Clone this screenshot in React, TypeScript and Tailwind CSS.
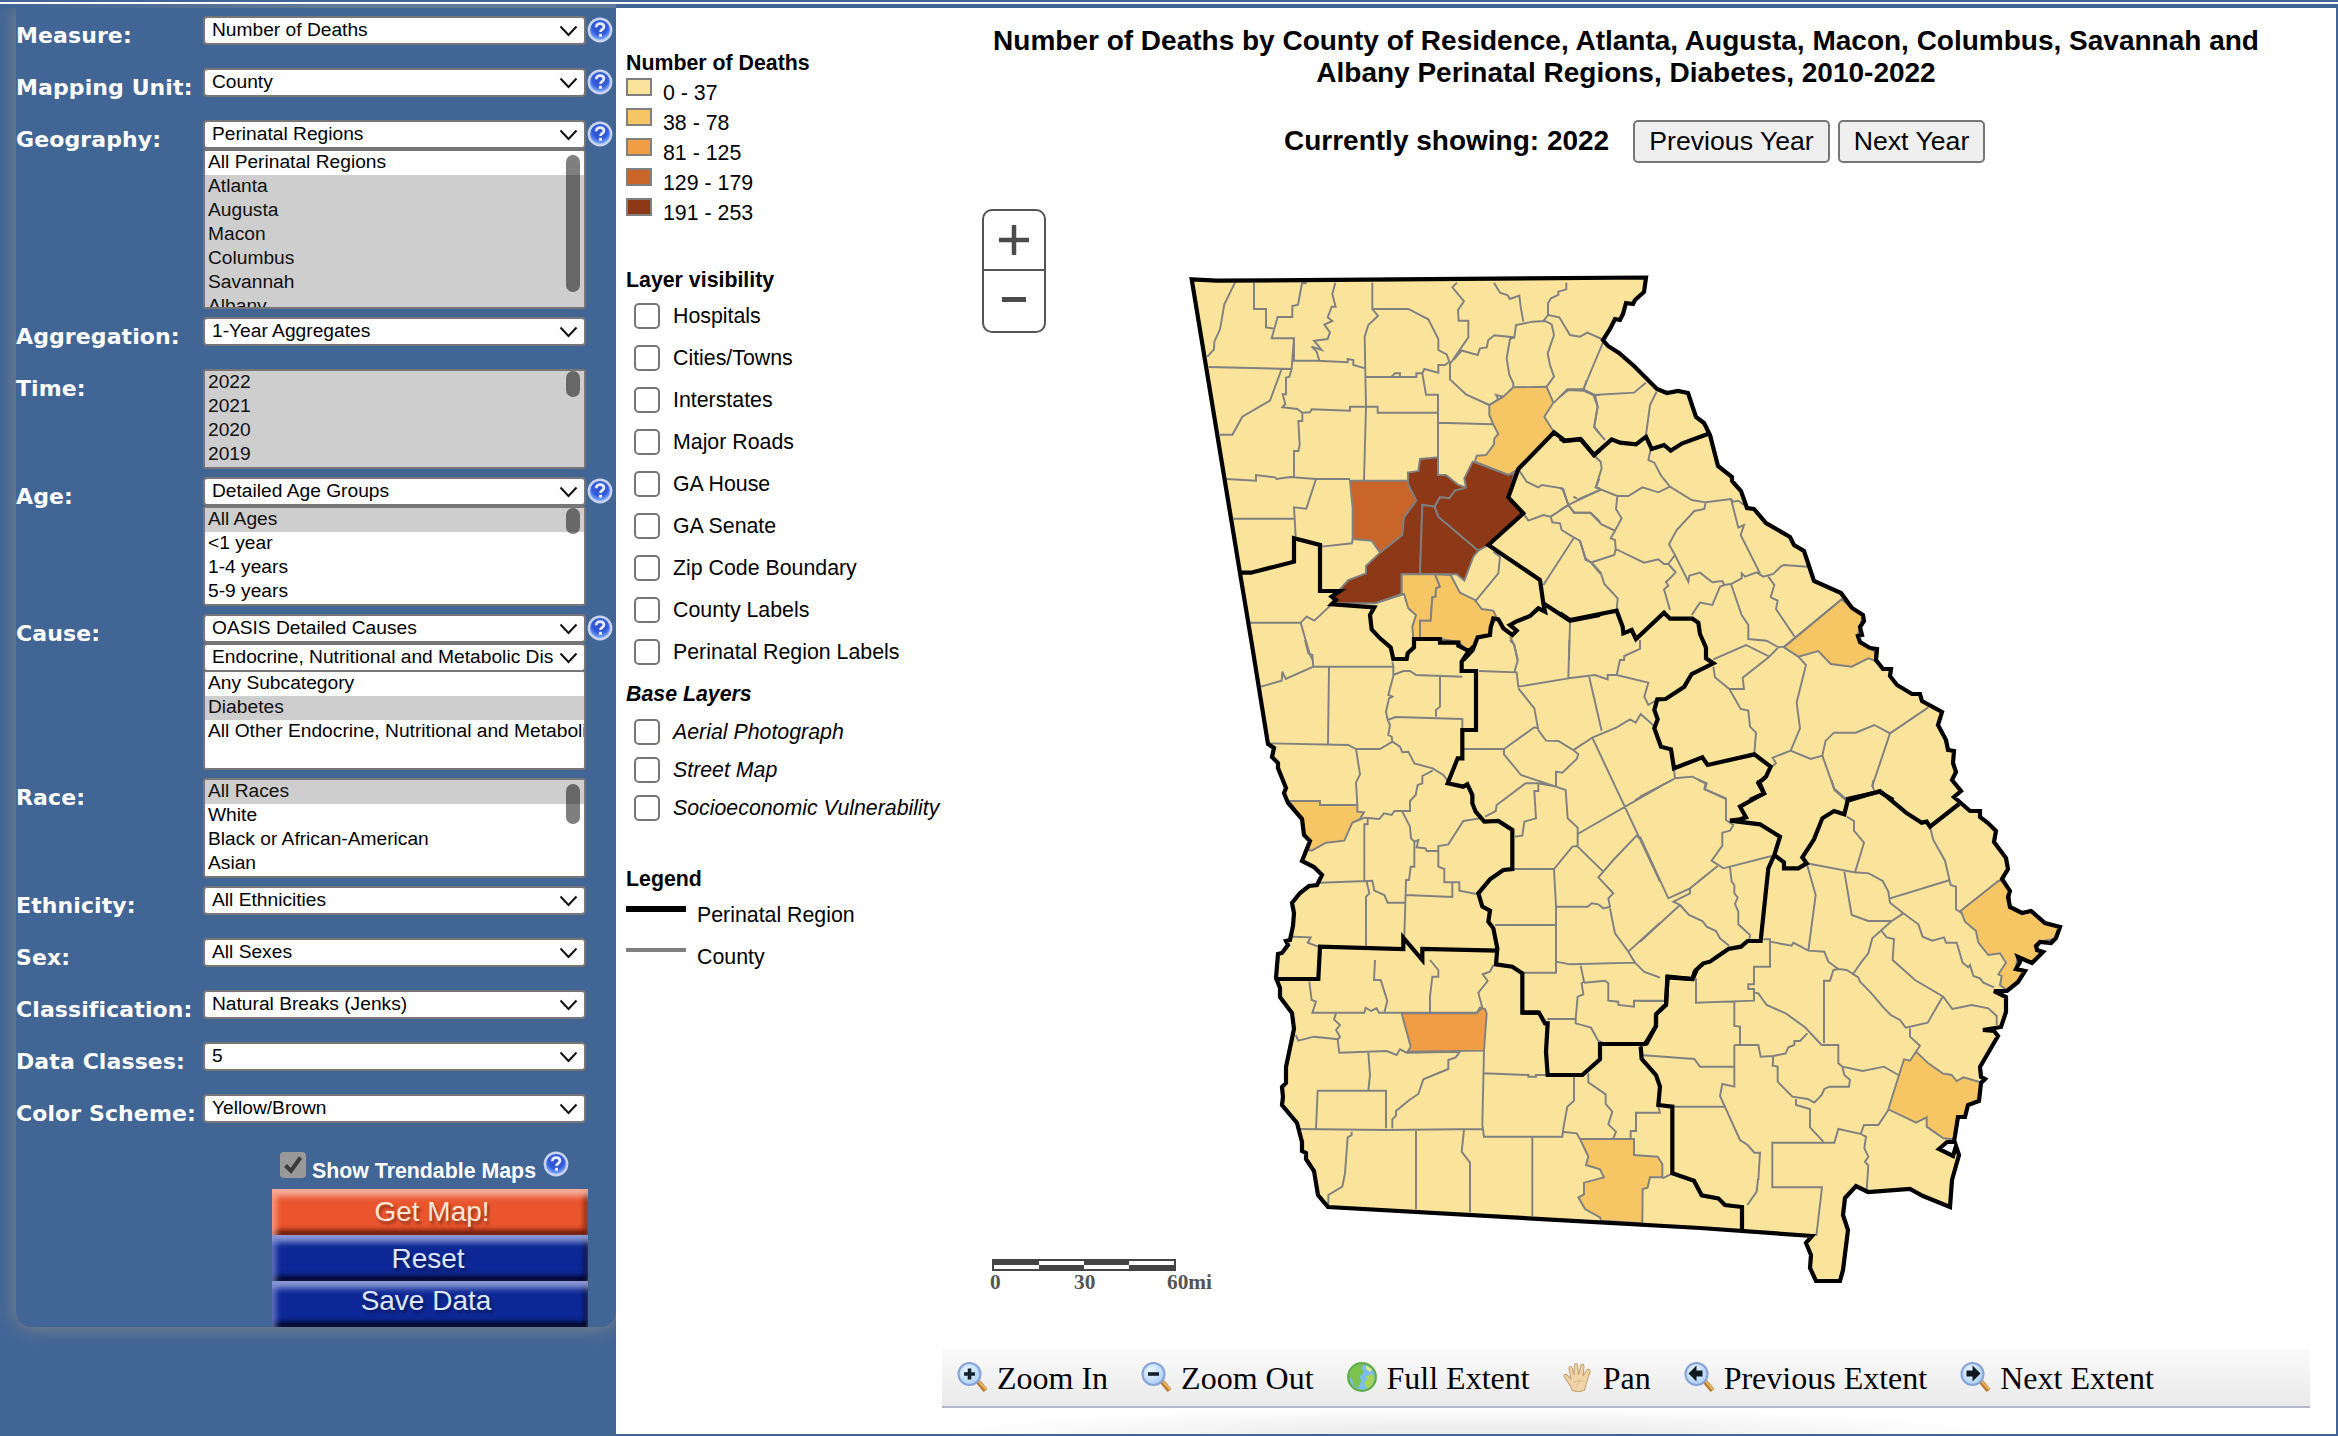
import React from "react";

const LIGHT = "#fae49b";
const GOLD = "#f6c665";
const ORANGE = "#f09d45";
const RUST = "#c96529";
const BROWN = "#8d3817";

/* ---------- map data ---------- */

const STATE =
  "M1191.7,279.3 L1216.7,280.7 L1646,277.5 L1644,292 L1635,300 L1633,304 L1626,303 L1623,314 L1620,320 L1615,319 L1610,329 L1603,340 L1608,346 L1619,353 L1634,366 L1647,379 L1657,389 L1667,393 L1678,391 L1688,393 L1696,417 L1704,423 L1710,435 L1718,466 L1732,477 L1732,481 L1741,491 L1747,508 L1754,509 L1766,523 L1790,537 L1794,545 L1804,551 L1814,581 L1841,593 L1852,608 L1863,615 L1864,621 L1860,627 L1862,635 L1858,636 L1860,642 L1870,648 L1877,649 L1876,660 L1883,669 L1891,669 L1890,676 L1897,685 L1912,694 L1920,694 L1922,701 L1942,712 L1938,725 L1946,740 L1948,750 L1954,751 L1953,763 L1956,772 L1952,780 L1961,791 L1954,797 L1970,811 L1980,811 L1980,817 L1988,823 L1996,831 L1994,842 L2006,858 L2008,869 L2002,879 L2010,891 L2008,897 L2010,907 L2022,913 L2031,911 L2045,923 L2060,927 L2056,938 L2051,943 L2040,942 L2036,946 L2037,950 L2043,952 L2032,963 L2018,957 L2020,962 L2016,969 L2025,971 L2018,982 L2007,991 L1994,991 L2006,997 L2006,1012 L2001,1027 L1983,1030 L1994,1031 L1998,1036 L1980,1067 L1981,1077 L1985,1079 L1981,1083 L1979,1101 L1968,1105 L1965,1117 L1958,1117 L1954,1142 L1947,1142 L1939,1149 L1953,1156 L1956,1146 L1959,1155 L1952,1180 L1950,1207 L1923,1196 L1910,1189 L1868,1192 L1856,1186 L1845,1198 L1843,1215 L1848,1230 L1843,1270 L1840,1281 L1816,1281 L1810,1268 L1811,1255 L1806,1243 L1812,1236 L1700,1228 L1328,1207 L1318,1195 L1314,1171 L1306,1159 L1306,1153 L1302,1151 L1302,1142 L1297,1123 L1282,1105 L1283,1097 L1282,1087 L1286,1083 L1286,1067 L1294,1029 L1292,1013 L1280,997 L1280,988 L1276,978 L1278,954 L1282,953 L1288,945 L1286,941 L1290,940 L1293,926 L1294,913 L1292,903 L1300,893 L1309,886 L1317,885 L1322,875 L1314,867 L1302,861 L1310,841 L1304,835 L1302,819 L1288,803 L1284,793 L1286,788 L1278,768 L1278,763 L1272,757 L1274,748 L1268,744 L1252,645 L1240,573 Z";

type Sheet = {
  at: string;
  fills: [string, string][];
  county: string;
  region: string;
};

/* The map is kept as five sheets, each drawn in its own three-to-one grid. */
const SHEETS: Sheet[] = [
  {
    at: "translate(1180 260) scale(0.33333)",
    fills: [
      [GOLD, "M928,435 L970,410 L1000,382 L1100,380 L1120,428 L1093,470 L1122,517 L1015,627 L985,645 L885,605 L890,587 L918,585 L942,553 L943,535 L955,522 L940,493 L928,465 Z"],
      [RUST, "M510,662 H684 V672 L709,722 L672,772 L667,825 L600,878 L575,842 L518,837 V745 Z"],
      [BROWN, "M684,662 V638 L715,633 L720,597 L774,592 V645 H798 L835,675 L858,683 L825,692 L808,715 L780,712 L764,740 L727,735 L720,943 H665 V1002 L585,1030 L470,1030 L460,1010 L505,960 L558,940 V918 L600,878 L667,825 L672,772 L709,722 L684,672 Z"],
      [BROWN, "M727,735 L764,740 L775,770 L895,872 L880,890 L853,962 L830,943 H720 Z"],
      [BROWN, "M764,740 L780,712 L808,715 L825,692 L858,683 L853,655 L878,605 L985,645 L1003,640 L985,712 L1030,760 L925,855 L895,872 L775,770 Z"],
      [GOLD, "M665,943 H765 L780,980 L768,985 L767,1010 L757,1012 L752,1082 H720 V1135 H700 L697,1100 L708,1065 L685,1045 L672,1002 L665,1002 Z"],
      [GOLD, "M765,943 L812,945 L840,998 L885,1020 L905,1047 L940,1052 L950,1073 L932,1103 L930,1125 L893,1132 L878,1170 L860,1170 L835,1145 L780,1137 L720,1135 V1082 H752 L757,1012 L767,1010 L768,985 L780,980 Z"],
    ],
    county:
      "M165,68 L133,133 L120,208 L103,245 L102,268 L82,290 M222,68 V147 H258 V202 L283,206 L293,171 H337 V138 L354,134 L366,70 H380 M283,206 L275,235 H342 V302 H410 L503,307 V297 L520,300 V315 L556,325 M466,68 L457,102 L467,140 H455 L443,172 L457,183 L433,194 L450,217 L443,237 L402,242 L425,270 L395,260 L410,275 L418,302 M342,235 L335,325 M86,321 L335,327 L328,350 L318,353 V403 H308 L316,432 L307,442 L352,447 L367,458 L390,457 L395,448 L510,452 V440 H593 V458 H774 M305,327 L270,422 L187,470 L157,524 H120 M367,458 V483 H355 L359,555 L355,573 H342 V652 M577,68 V147 H685 L745,178 L775,237 V270 L800,283 L808,305 L795,315 H775 V338 L733,327 L727,340 H709 V351 H558 M577,147 L594,168 L565,195 L554,230 L558,440 L552,660 M635,350 L645,340 H660 V350 M727,340 L738,404 H774 V645 M831,68 L817,82 L852,124 L834,150 L836,182 H865 V232 L810,312 V358 L858,403 L928,435 M775,488 L940,493 M820,300 L845,272 L893,285 L900,265 L920,262 L925,240 L943,226 L1003,232 L1008,195 L1058,185 L1095,183 L1115,193 L1122,225 L1103,280 L1110,315 L1122,350 L1100,380 M970,410 L948,405 L955,418 L928,435 M1003,232 L990,237 L980,295 L988,345 L1000,370 V382 M942,68 L960,98 L982,105 L990,117 L1018,107 L1022,140 L1030,185 M1159,68 V88 L1135,95 V105 L1113,115 L1104,130 V165 L1090,183 M1104,165 L1138,172 L1170,225 L1200,230 L1222,218 L1272,240 M1272,240 L1210,388 L1162,388 L1122,428 M1210,388 L1245,405 L1253,440 L1243,500 L1260,522 M1240,405 H1260 M140,657 L228,662 V645 L285,652 L290,657 L330,651 L408,657 H510 M408,657 L379,746 L342,742 L347,830 M160,776 H342 M518,837 L516,850 L425,860 M960,890 L955,940 L885,1025 M960,890 L940,875 M585,1030 L672,1002 M210,1088 H362 L390,1185 L398,1200 M362,1088 L380,1070 L403,1082 L455,1033 M1015,627 L1040,665 L1075,682 L1085,675 L1147,685 L1165,735 L1112,770 L1090,765 L1045,782 L1030,760 M1165,735 L1183,758 H1232 L1260,785 M1165,735 L1260,690 M1112,770 L1117,787 L1140,790 L1145,810 L1182,833 L1090,975 M1182,833 L1200,842 L1217,895 L1235,910 L1260,940 M1245,590 L1260,605 M1260,685 L1248,682 L1258,655 M1170,1088 L1167,1200 M990,1130 L1003,1155 L1013,1200",
    region:
      "M1260,570 L1242,585 L1202,537 L1155,542 L1122,517 L1015,627 L985,712 L1030,760 L925,855 L1080,960 L1090,1030 L1170,1082 L1260,1065 M1090,1030 L1095,1055 L1075,1045 L1050,1068 L1008,1085 L990,1095 L1010,1112 L997,1125 L970,1105 L955,1078 L940,1075 L932,1103 L930,1125 L893,1132 L878,1170 L850,1200 M878,1170 L860,1170 L835,1157 V1148 H780 V1137 H702 V1162 L683,1180 L680,1197 H640 L632,1162 L600,1135 L575,1108 L570,1065 L583,1042 L455,1033 L468,1020 L455,1010 L480,993 H420 V855 L342,835 V905 L213,938 H182",
  },
  {
    at: "translate(1560 380) scale(0.33333)",
    fills: [
      [GOLD, "M845,658 L875,685 L908,705 L900,742 L893,765 L900,785 L945,815 L945,842 L925,835 L875,860 L812,852 L775,813 L715,830 L672,802 Z"],
    ],
    county:
      "M0,50 L25,30 L70,32 L80,0 M70,32 L100,45 L113,80 L102,142 L135,180 M100,45 L222,38 L258,8 M290,35 L270,75 L258,165 M102,225 L122,245 L125,265 L107,322 L172,348 L205,348 L247,322 L295,337 L330,320 L395,360 L437,367 L513,357 L520,365 L535,362 L555,377 M272,208 L265,240 L283,248 L302,285 L330,320 M50,355 L40,350 M50,360 L125,328 M0,390 L25,375 M0,325 L10,328 L25,375 L42,398 H90 L125,433 L165,452 L185,415 L168,387 L172,348 M165,452 L152,475 L165,480 L167,507 L163,525 L95,547 L122,578 L133,612 L173,655 L170,690 M60,483 L77,540 L95,547 M167,507 L252,548 L295,538 L312,552 L325,552 L347,577 L325,600 L318,605 L325,617 L312,628 L330,690 M437,367 L433,387 L403,393 L350,450 L327,493 L345,525 L385,605 L388,587 L420,578 L457,607 L487,603 L493,615 L513,612 L545,595 V580 L555,590 L590,577 L610,590 L640,582 L662,560 L672,555 L742,560 M345,525 L325,552 M513,357 L535,443 L552,435 L542,465 L600,580 M513,612 L545,705 L565,735 V777 L620,782 L655,802 L672,800 L845,658 M493,615 L480,620 L457,675 L420,668 L395,705 M625,590 L643,615 L632,652 L653,662 L648,687 L705,772 M715,830 L738,855 L710,967 L720,1045 L692,1112 L752,1137 L787,1127 L797,1082 L822,1058 H887 L943,1035 L990,1060 L937,1218 L942,1230 M990,1060 L1105,982 M787,1127 L822,1225 L858,1258 M692,1112 L638,1133 L648,1150 L635,1160 M460,838 L558,795 L628,830 L655,802 M628,830 L548,893 L552,927 H508 L465,892 L460,860 M508,927 L542,987 L565,992 L570,1040 L588,1058 L583,1120 M240,780 V807 L193,828 L192,840 L180,840 L170,885 M342,1168 L345,1195 L225,1260 M345,1195 L397,1190 L437,1210 L433,1227 L500,1258",
    region:
      "M0,175 L12,183 L62,178 L102,225 L155,178 L180,188 L228,193 L258,170 L275,207 L312,195 L332,212 L367,190 L450,160 M0,700 L30,720 L170,692 L188,740 L190,760 L215,750 L228,777 L312,698 L330,716 H397 L415,728 L420,762 L438,803 V835 L460,850 L395,882 L373,920 L317,957 L292,958 L283,990 L293,1018 L283,1045 L303,1100 L333,1108 L342,1165 L427,1132 L443,1155 L583,1123 L632,1160 L618,1190 L595,1210 L612,1240 L570,1260 M858,1258 L958,1235 L1000,1260",
  },
  {
    at: "translate(1240 640) scale(0.33333)",
    fills: [
      [GOLD, "M148,483 H240 V495 H352 V515 L372,517 L360,537 L337,548 L313,602 L258,608 L215,632 L205,630 L210,602 L192,585 L187,538 Z"],
    ],
    county:
      "M195,0 L205,40 L217,45 L220,80 L137,117 L127,95 L125,122 L63,140 M220,80 H460 L457,65 M267,80 L264,312 M88,310 L325,315 L348,327 H420 L457,305 L455,290 L445,285 L450,255 L443,240 L438,215 L447,175 L457,170 L445,165 L460,108 V80 M460,105 L490,93 H510 L528,105 L667,110 M600,105 V200 L588,210 V230 M443,240 L467,231 L667,237 V270 M457,305 L480,320 L487,337 L505,335 L523,370 L578,385 L610,405 L625,425 M348,327 L360,403 L348,427 L352,495 M375,533 L418,537 L432,520 L455,525 L463,513 H510 V483 L527,465 L533,435 L547,430 V408 L578,392 M337,548 L375,533 M383,535 V553 H373 V722 M240,728 L397,722 L403,752 L433,765 L443,788 H497 M380,725 L388,760 L378,770 V918 M487,515 L510,560 L513,595 L523,605 V680 H512 L507,720 H498 L493,890 M523,605 L535,600 L530,622 L557,625 L560,633 H593 M498,765 L637,771 V727 H613 V687 L595,680 V618 L625,613 L670,543 L720,535 M637,727 H658 V752 L710,762 M158,890 L212,892 L203,908 L235,920 M717,93 L830,97 L835,140 L985,115 M810,0 L823,15 L833,62 L823,97 M985,115 L1065,105 L1103,118 V105 H1130 L1225,128 L1213,170 L1225,195 L1250,180 M1047,108 L1085,272 M835,145 L883,205 L895,270 L918,302 L955,303 L1000,330 L1057,293 L1130,262 L1170,238 L1187,248 L1202,222 L1245,260 M985,115 L988,0 M1057,293 L1260,725 M1000,330 L1015,343 L1010,357 L967,398 L948,395 V440 L843,405 L792,343 V327 H672 M792,327 L883,262 L895,265 M948,440 L977,450 L983,535 L1013,563 V620 L1090,695 L1120,660 L1190,587 L1203,600 M1013,582 L1260,440 M1013,618 L997,620 L942,687 H820 M948,440 L895,430 H857 L770,495 L767,513 L735,530 M895,430 V453 H883 L888,535 L853,545 L847,587 L825,590 M942,687 L948,800 V998 H850 M948,800 H1043 L1055,790 L1075,793 L1090,805 L1110,800 L1105,775 L1120,760 L1075,712 L1090,695 M765,855 H948 M1110,805 L1125,880 L1165,935 L1260,848 M1165,935 L1185,968 L990,973 L948,965 M1185,968 L1212,995 L1260,1013",
    region:
      "M700,20 L683,38 L665,65 V93 H708 V270 H667 V355 L653,355 L623,430 L670,440 L682,433 L697,465 V490 L707,515 L733,545 L775,543 L817,570 V687 L790,690 L750,718 L715,760 L727,800 L750,812 L745,845 L760,865 L772,925 L768,973 L817,980 L847,1000 V1118 H897 M108,1017 H235 L240,920 L490,927 V893 L547,960 V927 L772,932",
  },
  {
    at: "translate(1260 960) scale(0.33333)",
    fills: [
      [ORANGE, "M425,160 H650 L660,143 L675,147 L680,160 L672,272 L443,275 L452,260 Z"],
      [GOLD, "M960,537 H1122 V585 L1193,590 L1207,612 V652 H1170 L1163,683 L1148,687 L1147,790 L1023,782 L1020,772 L975,747 L955,712 L972,703 V668 L1032,652 L1020,628 L978,615 L985,590 Z"],
    ],
    county:
      "M148,65 L155,120 L168,125 L157,158 H313 L317,143 L333,153 L350,145 L357,158 H650 L668,143 M345,0 L342,60 H362 L382,122 L373,158 M510,0 L535,30 V50 H517 L510,110 V158 M700,15 L690,35 L668,43 L683,63 L655,98 L667,143 M228,160 L222,178 L240,195 L228,210 L240,230 L233,240 L238,278 L380,273 L410,285 L420,268 L440,278 L600,275 M107,225 L115,242 L162,230 L235,238 M325,278 L330,345 L325,392 M168,505 L173,392 H378 V505 M118,507 L380,510 L667,507 M600,275 L587,292 L565,300 V327 L490,358 L475,402 L448,420 L408,453 V467 L397,478 V505 M672,272 L667,495 L672,530 H907 L910,505 L922,440 L942,422 V350 M672,340 L805,345 V350 H828 V345 H860 M907,515 L950,520 L960,537 M985,340 V367 L1037,403 V432 L1057,455 L1045,493 L1068,515 L1060,535 M1112,535 V513 H1128 V458 H1200 L1195,440 M1207,655 L1235,642 M275,515 L275,525 L263,532 L255,640 L247,680 L205,705 V740 M468,510 V748 M612,510 L605,575 L630,608 V757 M817,532 V768 M862,177 H947 L953,110 L970,103 L965,70 L972,65 L962,17 M947,177 V190 L993,203 L1015,243 L1028,247 M972,68 L1035,62 L1045,70 V122 L1075,125 V135 L1122,140 V122 H1215",
    region:
      "M787,158 H837 L855,190 L863,190 L858,275 L863,345 H967 L1020,298 V252 L1155,252 L1188,198 V163 L1218,133 L1223,50 L1298,57 L1310,30 M1142,260 L1145,297 L1188,345 L1200,380 L1195,435 L1237,440 V640 L1302,662 L1325,706 L1375,715 L1395,735 L1446,741 V816",
  },
  {
    at: "translate(1640 780) scale(0.33333)",
    fills: [
      [GOLD, "M962,392 L1075,303 L1090,300 L1110,335 L1110,382 L1147,400 L1172,393 L1215,430 L1260,442 L1248,475 L1200,485 L1190,510 L1210,515 L1177,550 L1133,530 L1127,567 L1155,572 L1133,607 L1100,630 L1080,615 L1085,588 L1075,583 L1098,548 L1080,520 L1045,525 L1015,488 L1008,453 L975,425 Z"],
      [GOLD, "M828,815 L865,850 L908,880 L935,885 L950,903 L970,892 L1022,907 L1017,962 L985,975 L975,1010 L955,1010 L940,1078 L910,1075 L860,1040 V1012 L828,1028 L745,988 L792,838 L810,842 Z"],
    ],
    county:
      "M175,0 L200,10 L195,28 L258,55 V120 L280,135 L270,152 L247,158 V197 L215,242 L250,265 L395,228 M0,50 L97,0 M0,170 L85,355 L150,325 L233,258 M150,325 V340 L100,365 L120,375 L0,485 M120,375 L147,405 L187,423 L200,440 L228,453 L240,475 L268,498 M270,262 L275,305 L283,315 V340 L293,352 L285,372 L295,395 V433 L330,465 L328,478 M620,110 L642,123 V152 L672,188 L645,277 L500,250 L527,345 L505,512 M613,275 L635,405 L685,423 H755 L790,400 M645,277 L687,280 L728,303 L745,335 L750,368 L790,400 L835,433 L848,470 L877,482 L912,472 L918,488 H950 L968,548 L985,562 L990,555 L1000,588 L1020,595 L1030,608 L1062,622 M750,355 L930,300 M870,140 L880,180 L915,242 L932,315 L948,320 V388 L965,400 M575,0 L583,30 L620,62 M700,0 L697,20 M755,423 L697,475 L685,520 L665,545 L637,585 M725,453 L740,472 L762,477 L758,540 L825,600 L910,650 L937,687 L995,675 L1045,685 L1070,708 V735 M370,478 H390 V560 H342 V613 H325 V627 H342 V662 L168,668 V595 M390,485 L455,497 L460,488 L505,512 L553,515 L565,545 L595,567 L620,570 L655,592 L660,605 L680,625 L703,650 L728,680 L752,705 L780,720 L797,743 L863,728 L908,650 M595,567 L580,570 L570,602 H552 V790 M342,638 L355,640 L380,675 L437,700 L495,742 L545,795 L595,795 V850 L607,860 L668,873 L732,860 L775,885 M810,745 V770 L840,797 L828,815 M745,990 L715,1035 H672 L662,1062 L595,1047 L583,1088 H397 V1222 H546 L529,1368 M354,1198 L350,1235 L322,1275 M662,1062 L678,1070 L673,1105 L685,1130 L675,1145 L685,1157 L680,1230 M283,665 V738 L300,740 V795 M283,795 H355 L362,830 L400,828 L437,820 L445,802 L463,795 V783 H480 L502,760 M283,795 V920 L247,912 L240,948 L300,1080 L323,1095 L343,1118 H360 L355,1200 M0,825 L163,837 L180,860 H283 M100,980 H258 M400,828 L398,857 L413,860 V905 L457,950 L503,957 L523,968 L545,945 L553,927 L568,920 H627 L630,900 L613,885 L607,860 M468,953 V975 L510,987 V1042 L550,1085 M0,663 H78",
    region:
      "M355,0 L372,40 L300,80 L318,112 L300,118 L270,122 L360,133 L420,170 L403,225 L432,247 V265 H475 L500,250 L487,232 L522,178 L547,115 L582,93 L613,103 L623,62 L720,33 L798,98 L845,128 L860,125 L870,140 L957,72 M403,225 L385,265 L362,483 H323 L303,500 L265,507 L210,545 L190,550 L165,573 L157,597 L82,592 L78,675 L48,703 V738 L20,790 L0,795",
  },
];

function GeorgiaMap() {
  return (
    <svg className="block h-[1186px] w-[1394px]" viewBox="942 163 1394 1186">
      <path d={STATE} fill={LIGHT} />
      {SHEETS.map((s) => (
        <g key={s.at} transform={s.at} stroke="#808080" strokeWidth="5.8" fill="none">
          {s.fills.map(([c, d]) => (
            <path key={d} d={d} fill={c} />
          ))}
          <path d={s.county} />
        </g>
      ))}
      {SHEETS.map((s) => (
        <g key={s.at} transform={s.at}>
          <path d={s.region} stroke="#000" strokeWidth="12.6" fill="none" />
        </g>
      ))}
      <path d={STATE} fill="none" stroke="#000" strokeWidth="4.2" />
    </svg>
  );
}

/* ---------- sidebar ---------- */

function Help({ id }: { id: string }) {
  return (
    <svg className="block h-[26px] w-[26px] shrink-0" viewBox="0 0 26 26">
      <defs>
        <radialGradient id={id} cx="0.5" cy="0.35" r="0.65">
          <stop offset="0" stopColor="#2c50d2" />
          <stop offset="0.6" stopColor="#345bda" />
          <stop offset="1" stopColor="#7fb0ff" />
        </radialGradient>
      </defs>
      <circle cx="13" cy="13" r="12.4" fill="#c9d3f0" />
      <circle cx="13" cy="13" r="10" fill={`url(#${id})`} />
      <path d="M9.2 10.2c0-2.2 1.700-3.600 3.900-3.600s3.800 1.300 3.800 3.200c0 2.600-3.400 2.700-3.400 5.200" fill="none" stroke="#e6ecff" strokeWidth="2.8" />
      <rect x="12" y="16.800" width="3" height="3" fill="#e6ecff" />
    </svg>
  );
}

function Select({ value, clip }: { value: string; clip?: boolean }) {
  return (
    <div className="flex h-[29px] w-[383px] items-start justify-between rounded-[4px] border-2 border-[#767676] bg-white pl-[7px] pr-[6px] text-[19.2px] leading-[24px] text-black">
      <span className={clip ? "w-[341px] overflow-hidden whitespace-nowrap" : "whitespace-nowrap"}>{value}</span>
      <svg className="mt-[7px] h-[12px] w-[19px]" viewBox="0 0 19 12">
        <path d="M1.5 1.5 L9.5 10 L17.5 1.5" fill="none" stroke="#111" strokeWidth="2" />
      </svg>
    </div>
  );
}

function List({
  items,
  selected,
  tall,
  thumb,
}: {
  items: string[];
  selected: number[];
  tall?: boolean;
  thumb?: string;
}) {
  return (
    <div
      className={
        (tall ? "h-[160px]" : "h-[100px]") +
        " relative w-[383px] overflow-hidden rounded-[3px] border-2 border-[#767676] bg-white text-[19.2px] leading-[21px] text-black"
      }
    >
      {items.map((t, i) => (
        <div
          key={t}
          className={"h-6 whitespace-nowrap pl-[3px] " + (selected.includes(i) ? "bg-[#cecece] text-[#101010]" : "")}
        >
          {t}
        </div>
      ))}
      {thumb && <div className={"absolute right-[4px] w-[14px] rounded-full bg-black/50 " + thumb} />}
    </div>
  );
}

function Row({
  label,
  h,
  help,
  children,
}: {
  label: string;
  h: string;
  help?: boolean;
  children: React.ReactNode;
}) {
  return (
    <div className={"flex items-start " + h}>
      <div className="w-[187px] shrink-0 whitespace-nowrap pt-[6px] font-['Verdana','DejaVu_Sans',sans-serif] text-[22px] font-bold leading-[27px] tracking-[0.1px] text-white">
        {label}
      </div>
      <div className="w-[384px] shrink-0">{children}</div>
      {help && (
        <div className="pt-px">
          <Help id={"help-" + label.replace(/[^a-z]/gi, "")} />
        </div>
      )}
    </div>
  );
}

function BevelButton({ label, tone, text }: { label: string; tone: string; text: string }) {
  return (
    <button className={"block h-[46px] w-[316px] text-center text-[28px] leading-[30px] " + tone}>
      <span className={"relative [text-shadow:2px_3px_3px_rgba(0,0,0,0.4)] " + text}>{label}</span>
    </button>
  );
}

const BLUE_TONE =
  "bg-[#0d2896] text-[#dfe6f7] shadow-[inset_7px_0_5px_-2px_rgba(130,145,215,0.55),inset_0_9px_6px_-2px_rgba(165,175,225,0.85),inset_-6px_0_5px_-2px_rgba(0,0,20,0.65),inset_0_-7px_5px_-2px_rgba(0,0,20,0.85)]";
const RED_TONE =
  "bg-[#ea552e] text-[#fde6d6] shadow-[inset_7px_0_5px_-2px_rgba(255,165,140,0.7),inset_0_9px_6px_-2px_rgba(245,185,170,0.9),inset_-6px_0_5px_-2px_rgba(80,15,0,0.65),inset_0_-7px_5px_-2px_rgba(70,10,0,0.8)]";

function Sidebar() {
  return (
    <aside className="w-[616px] shrink-0 overflow-hidden bg-[#416595] pl-4">
      <div className="h-[1319px] rounded-b-[16px] bg-[#416595] pt-2 shadow-[0_0_20px_#888]">
        <Row label="Measure:" h="h-[52px]" help>
          <Select value="Number of Deaths" />
        </Row>
        <Row label="Mapping Unit:" h="h-[52px]" help>
          <Select value="County" />
        </Row>
        <Row label="Geography:" h="h-[197px]" help>
          <Select value="Perinatal Regions" />
          <List
            tall
            items={["All Perinatal Regions", "Atlanta", "Augusta", "Macon", "Columbus", "Savannah", "Albany"]}
            selected={[1, 2, 3, 4, 5, 6]}
            thumb="top-[4px] h-[137px]"
          />
        </Row>
        <Row label="Aggregation:" h="h-[52px]">
          <Select value="1-Year Aggregates" />
        </Row>
        <Row label="Time:" h="h-[108px]">
          <List items={["2022", "2021", "2020", "2019"]} selected={[0, 1, 2, 3]} thumb="top-0 h-[26px]" />
        </Row>
        <Row label="Age:" h="h-[137px]" help>
          <Select value="Detailed Age Groups" />
          <List items={["All Ages", "<1 year", "1-4 years", "5-9 years"]} selected={[0]} thumb="top-0 h-[26px]" />
        </Row>
        <Row label="Cause:" h="h-[164px]" help>
          <Select value="OASIS Detailed Causes" />
          <Select value="Endocrine, Nutritional and Metabolic Diseases" clip />
          <div className="-mt-[2px]">
            <List
              items={["Any Subcategory", "Diabetes", "All Other Endocrine, Nutritional and Metabolic Diseases"]}
              selected={[1]}
            />
          </div>
        </Row>
        <Row label="Race:" h="h-[108px]">
          <List
            items={["All Races", "White", "Black or African-American", "Asian"]}
            selected={[0]}
            thumb="top-[4px] h-[40px]"
          />
        </Row>
        <Row label="Ethnicity:" h="h-[52px]">
          <Select value="All Ethnicities" />
        </Row>
        <Row label="Sex:" h="h-[52px]">
          <Select value="All Sexes" />
        </Row>
        <Row label="Classification:" h="h-[52px]">
          <Select value="Natural Breaks (Jenks)" />
        </Row>
        <Row label="Data Classes:" h="h-[52px]">
          <Select value="5" />
        </Row>
        <Row label="Color Scheme:" h="h-[57px]">
          <Select value="Yellow/Brown" />
        </Row>
        <div className="flex h-[38px] items-start pl-[264px]">
          <div className="mt-px flex h-[26px] w-[26px] items-center justify-center rounded-[4px] bg-[#999]">
            <svg className="h-[20px] w-[20px]" viewBox="0 0 20 20">
              <path d="M2.5 10.5 L8 16 L17.5 2.5" fill="none" stroke="#3c3c3c" strokeWidth="4" />
            </svg>
          </div>
          <span className="ml-[6px] mt-[7px] w-[231px] whitespace-nowrap text-[21.33px] font-bold leading-[26px] text-white">
            Show Trendable Maps
          </span>
          <Help id="help-trend" />
        </div>
        <div className="ml-[256px]">
          <BevelButton label="Get Map!" tone={RED_TONE} text="left-[2px] top-0" />
          <BevelButton label="Reset" tone={BLUE_TONE} text="-left-[2px] top-[1px]" />
          <BevelButton label="Save Data" tone={BLUE_TONE} text="-left-[4px] -top-[3px]" />
        </div>
      </div>
    </aside>
  );
}

/* ---------- legend column ---------- */

const CLASSES = [
  { label: "0 - 37", color: "bg-[#fae49b]" },
  { label: "38 - 78", color: "bg-[#f6c665]" },
  { label: "81 - 125", color: "bg-[#f09d45]" },
  { label: "129 - 179", color: "bg-[#c96529]" },
  { label: "191 - 253", color: "bg-[#8d3817]" },
];

const LAYERS = [
  "Hospitals",
  "Cities/Towns",
  "Interstates",
  "Major Roads",
  "GA House",
  "GA Senate",
  "Zip Code Boundary",
  "County Labels",
  "Perinatal Region Labels",
];

function Check({ label, h }: { label: string; h: string }) {
  return (
    <label className={"flex items-start pl-2 " + h}>
      <span className="h-[26px] w-[26px] rounded-[5px] border-2 border-[#767676] bg-white" />
      <span className="ml-[13px] whitespace-nowrap leading-[26px]">{label}</span>
    </label>
  );
}

function LegendColumn() {
  return (
    <section className="w-[326px] shrink-0 pl-[10px] pt-[42px] text-[21.33px] leading-[26px] text-black">
      <h2 className="h-[28px] font-bold">Number of Deaths</h2>
      {CLASSES.map((c) => (
        <div key={c.label} className="flex h-[30px] items-start">
          <span className={"h-[18px] w-[26px] border-2 border-[#808080] " + c.color} />
          <span className="ml-[11px] mt-[2px] whitespace-nowrap leading-[26px]">{c.label}</span>
        </div>
      ))}
      <h2 className="mt-[39px] h-[36px] font-bold">Layer visibility</h2>
      {LAYERS.map((l) => (
        <Check key={l} label={l} h="h-[42px]" />
      ))}
      <h2 className="h-[38px] font-bold italic">Base Layers</h2>
      <div className="italic">
        <Check label="Aerial Photograph" h="h-[38px]" />
        <Check label="Street Map" h="h-[38px]" />
        <Check label="Socioeconomic Vulnerability" h="h-[38px]" />
      </div>
      <h2 className="mt-[33px] h-[36px] font-bold">Legend</h2>
      <div className="flex h-[42px] items-start">
        <span className="mt-[4px] h-[6px] w-[60px] bg-black" />
        <span className="ml-[11px]">Perinatal Region</span>
      </div>
      <div className="flex h-[42px] items-start">
        <span className="mt-[4px] h-[4px] w-[60px] bg-[#808080]" />
        <span className="ml-[11px]">County</span>
      </div>
    </section>
  );
}

/* ---------- toolbar ---------- */

function Lens({ id, children }: { id: string; children: React.ReactNode }) {
  return (
    <svg className="block h-8 w-8" viewBox="0 0 32 32">
      <defs>
        <radialGradient id={id} cx="0.4" cy="0.35" r="0.7">
          <stop offset="0" stopColor="#eaf6ff" />
          <stop offset="1" stopColor="#a9cdf5" />
        </radialGradient>
      </defs>
      <path d="M22 20.5 L29.5 29.5" stroke="#b8792f" strokeWidth="5" />
      <path d="M22 19.5 L30 28.5" stroke="#e8b25f" strokeWidth="2" />
      <circle cx="13.5" cy="13" r="11" fill={`url(#${id})`} stroke="#86a2d8" strokeWidth="2" />
      {children}
    </svg>
  );
}

const ICONS: Record<string, React.ReactNode> = {
  "Zoom In": (
    <Lens id="lens-in">
      <path d="M13.5 7.5 V18.5 M8 13 H19" stroke="#14202c" strokeWidth="3.6" />
    </Lens>
  ),
  "Zoom Out": (
    <Lens id="lens-out">
      <path d="M8 13 H19" stroke="#14202c" strokeWidth="3.6" />
    </Lens>
  ),
  "Full Extent": (
    <svg className="block h-8 w-8" viewBox="0 0 32 32">
      <circle cx="16" cy="16" r="13.8" fill="#7dbcf0" stroke="#63ad4a" strokeWidth="2.4" />
      <path d="M4 11 C7 5 12 3 17 3.500 L16 8 L18 11 L14 15 L15 20 L12 27 L8 25 L6 18 L3.500 16 Z" fill="#7cc24e" />
      <path d="M20 15 L26 13 L28.500 17 L26 24 L21 28 L18 22 L21 19 Z" fill="#a5d65c" />
      <path d="M20 4.500 L26 8 L24 11 L20 8 Z" fill="#d5ec8c" />
    </svg>
  ),
  Pan: (
    <svg className="block h-8 w-8" viewBox="0 0 32 32">
      <path
        d="M10 29 C9 23 5 21 2 15 C2 13 4 13 5 14 L9 18 L7 7 C7 5 9.500 5 10 7 L12 14 L12.500 4 C13 2 15 2 15.500 4 L16.500 14 L19 4.500 C20 2.500 22 3.500 22 5 L21 15 L25 9 C26 7.500 28.500 8.500 28 10.500 L25 20 C24 25 23 26 22.500 29 C19 31 13 31 10 29 Z"
        fill="#f1d5a8"
        stroke="#c9a878"
        strokeWidth="1.2"
      />
      <path d="M11 22 C15 19 20 19 23 21 M14 26 L18 20" stroke="#dcbf90" strokeWidth="1.2" fill="none" />
    </svg>
  ),
  "Previous Extent": (
    <Lens id="lens-prev">
      <path d="M5.500 12.500 L13.500 4.500 V9.500 H19.500 V15.500 H13.500 V20.500 Z" fill="#101820" />
    </Lens>
  ),
  "Next Extent": (
    <Lens id="lens-next">
      <path d="M21.500 12.500 L13.500 4.500 V9.500 H7.500 V15.500 H13.500 V20.500 Z" fill="#101820" />
    </Lens>
  ),
};

function Toolbar() {
  return (
    <div className="flex h-[59px] w-[1368px] items-start gap-[32px] border-b-2 border-[#b3b8c8] bg-linear-to-b from-[#fafafa] to-[#eaeaea] pl-[14px] pt-[12px] font-['Liberation_Serif','Times_New_Roman',serif] text-[32px] leading-[34px] text-black">
      {Object.keys(ICONS).map((name) => (
        <div key={name} className="flex items-start gap-[9px] whitespace-nowrap">
          {ICONS[name]}
          <span>{name}</span>
        </div>
      ))}
    </div>
  );
}

/* ---------- map column ---------- */

function ScaleBar() {
  return (
    <div className="absolute left-[50px] top-[1096px] w-[240px] font-['Liberation_Serif',serif] text-[21.33px] font-bold leading-[22px] text-[#555]">
      <div className="grid h-[12px] w-[184px] grid-cols-4 grid-rows-2 border-2 border-[#444] bg-white">
        <i className="bg-[#444]" />
        <i />
        <i className="bg-[#444]" />
        <i />
        <i />
        <i className="bg-[#444]" />
        <i />
        <i className="bg-[#444]" />
      </div>
      <div className="flex">
        <span className="-ml-[2px] w-[84px]">0</span>
        <span className="w-[93px]">30</span>
        <span>60mi</span>
      </div>
    </div>
  );
}

function YearButton({ label, w }: { label: string; w: string }) {
  return (
    <button className={"h-[43px] rounded-[5px] border-2 border-[#767676] bg-[#efefef] pb-[2px] text-center leading-[36px] " + w}>
      {label}
    </button>
  );
}

function MapColumn() {
  return (
    <section className="flex w-[1394px] flex-col text-black">
      <h1 className="w-[1368px] px-[20px] pt-[17px] text-center text-[28px] font-bold leading-[32px]">
        Number of Deaths by County of Residence, Atlanta, Augusta, Macon, Columbus, Savannah and
        <br />
        Albany Perinatal Regions, Diabetes, 2010-2022
      </h1>
      <div className="mt-[31px] flex h-[43px] pl-[342px] text-[26.67px]">
        <span className="w-[349px] whitespace-nowrap text-[28px] font-bold leading-[41px]">Currently showing: 2022</span>
        <YearButton label="Previous Year" w="w-[197px]" />
        <span className="w-[8px]" />
        <YearButton label="Next Year" w="w-[147px]" />
      </div>
      <div className="relative h-[1186px]">
        <GeorgiaMap />
        <div className="absolute left-[40px] top-[46px] h-[124px] w-[64px] rounded-[10px] border-2 border-[#555] bg-white">
          <div className="flex h-[60px] items-center justify-center border-b-2 border-[#555]">
            <svg className="h-[30px] w-[30px]" viewBox="0 0 30 30">
              <path d="M15 0 V30 M0 15 H30" stroke="#4c4c4c" strokeWidth="4.5" />
            </svg>
          </div>
          <div className="flex h-[56px] items-center justify-center">
            <div className="h-[5px] w-[24px] bg-[#4c4c4c]" />
          </div>
        </div>
        <ScaleBar />
      </div>
      <Toolbar />
      <div className="h-[26px] w-[1060px] bg-[radial-gradient(ellipse_at_50%_100%,#eeeeee_20%,#ffffff_72%)]" />
    </section>
  );
}

export default function App() {
  return (
    <div className="h-[1436px] w-[2338px] overflow-hidden bg-[#416595] font-['Liberation_Sans',Arial,sans-serif]">
      <div className="h-[2px]" />
      <div className="h-[2px] bg-white" />
      <div className="h-[4px] w-[616px] bg-linear-to-r from-[#416595] via-[#5f7896] to-[#5f7896]" />
      <div className="flex h-[1426px] w-[2336px] bg-white">
        <Sidebar />
        <LegendColumn />
        <MapColumn />
      </div>
    </div>
  );
}
